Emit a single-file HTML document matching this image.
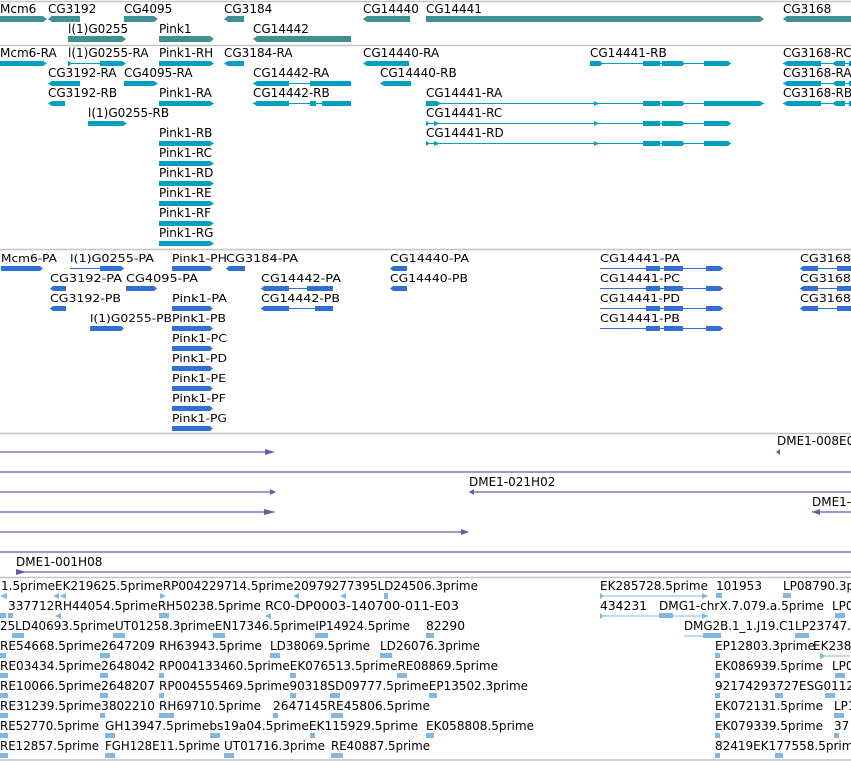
<!DOCTYPE html>
<html><head><meta charset="utf-8"><style>
html,body{margin:0;padding:0;background:#fff;width:851px;height:761px;overflow:hidden}
svg{display:block}
text{font-family:"DejaVu Sans","Liberation Sans",sans-serif;font-size:12px;fill:#000}
.c text{font-size:11px}
</style></head><body>
<svg width="851" height="761" viewBox="0 0 851 761" xmlns="http://www.w3.org/2000/svg">
<g stroke="#c4c4c4" stroke-width="1.5">
<line x1="0" y1="1.5" x2="851" y2="1.5"/><line x1="0" y1="45.5" x2="851" y2="45.5"/><line x1="0" y1="249.5" x2="851" y2="249.5"/><line x1="0" y1="433.5" x2="851" y2="433.5"/><line x1="0" y1="577.5" x2="851" y2="577.5"/><line x1="0" y1="760" x2="851" y2="760"/>
</g>
<!-- genes -->
<g>
<text x="0" y="13">Mcm6</text><text x="48" y="13">CG3192</text><text x="124" y="13">CG4095</text><text x="224" y="13">CG3184</text><text x="363" y="13">CG14440</text><text x="426" y="13">CG14441</text><text x="783" y="13">CG3168</text>
<text x="68" y="33">l(1)G0255</text><text x="159" y="33">Pink1</text><text x="253" y="33">CG14442</text>
</g>
<g fill="#3f8f93">
<polygon points="0,16 43,16 47,19 43,22 0,22"/>
<polygon points="52,16 80,16 80,22 52,22 48,19"/>
<polygon points="124,16 154,16 158,19 154,22 124,22"/>
<polygon points="228,16 244,16 244,22 228,22 224,19"/>
<polygon points="367,16 410,16 410,22 367,22 363,19"/>
<polygon points="426,16 760,16 764,19 760,22 426,22"/>
<polygon points="787,16 851,16 851,22 787,22 783,19"/>
<polygon points="68,36 122,36 126,39 122,42 68,42"/>
<polygon points="159,36 210,36 214,39 210,42 159,42"/>
<polygon points="257,36 351,36 351,42 257,42 253,39"/>
</g>
<!-- transcripts -->
<g>
<text x="0" y="57">Mcm6-RA</text><text x="68" y="57">l(1)G0255-RA</text><text x="159" y="57">Pink1-RH</text><text x="224" y="57">CG3184-RA</text><text x="363" y="57">CG14440-RA</text><text x="590" y="57">CG14441-RB</text><text x="783" y="57">CG3168-RC</text>
<text x="48" y="77">CG3192-RA</text><text x="124" y="77">CG4095-RA</text><text x="253" y="77">CG14442-RA</text><text x="380" y="77">CG14440-RB</text><text x="783" y="77">CG3168-RA</text>
<text x="48" y="97">CG3192-RB</text><text x="159" y="97">Pink1-RA</text><text x="253" y="97">CG14442-RB</text><text x="426" y="97">CG14441-RA</text><text x="783" y="97">CG3168-RB</text>
<text x="88" y="117">l(1)G0255-RB</text><text x="426" y="117">CG14441-RC</text>
<text x="159" y="137">Pink1-RB</text><text x="426" y="137">CG14441-RD</text>
<text x="159" y="157">Pink1-RC</text><text x="159" y="177">Pink1-RD</text><text x="159" y="197">Pink1-RE</text><text x="159" y="217">Pink1-RF</text><text x="159" y="237">Pink1-RG</text>
</g>
<g fill="#00a0c0" stroke="#00a0c0">
<g stroke="none">
<polygon points="0,61 43,61 47,63.5 43,66 0,66"/>
<polygon points="228,61 244,61 244,66 228,66 224,63.5"/>
<polygon points="367,61 409,61 409,66 367,66 363,63.5"/>
<polygon points="52,81 80,81 80,86 52,86 48,83.5"/>
<polygon points="124,81 154,81 158,83.5 154,86 124,86"/>
<polygon points="52,101 65,101 65,106 52,106 48,103.5"/>
<polygon points="384,81 411,81 411,86 384,86 380,83.5"/>
<polygon points="88,121 123,121 127,123.5 123,126 88,126"/>
</g>
<line x1="68" y1="63.5" x2="100" y2="63.5" stroke-width="1"/>
<polygon points="100,61 122,61 126,63.5 122,66 100,66" stroke="none"/>
<polygon points="68,60.5 72,63.5 68,66.5" stroke="none"/>
<!-- pink1 rows -->
<g stroke="none">
<polygon points="159,61 210,61 214,63.5 210,66 159,66"/>
<polygon points="159,101 210,101 214,103.5 210,106 159,106"/>
<polygon points="159,141 210,141 214,143.5 210,146 159,146"/>
<polygon points="159,161 210,161 214,163.5 210,166 159,166"/>
<polygon points="159,181 210,181 214,183.5 210,186 159,186"/>
<polygon points="159,201 210,201 214,203.5 210,206 159,206"/>
<polygon points="159,221 210,221 214,223.5 210,226 159,226"/>
<polygon points="159,241 210,241 214,243.5 210,246 159,246"/>
</g>
<!-- CG14442 -->
<line x1="253" y1="83.5" x2="351" y2="83.5" stroke-width="1"/>
<polygon points="257,81 289,81 289,86 257,86 253,83.5" stroke="none"/>
<polygon points="310,81 351,81 351,86 310,86" stroke="none"/>
<line x1="253" y1="103.5" x2="351" y2="103.5" stroke-width="1"/>
<polygon points="257,101 289,101 289,106 257,106 253,103.5" stroke="none"/>
<polygon points="310,101 316,101 316,106 310,106" stroke="none"/>
<polygon points="322,101 351,101 351,106 322,106" stroke="none"/>
<!-- CG14441 -->
<line x1="590" y1="63.5" x2="731" y2="63.5" stroke-width="1"/>
<line x1="426" y1="103.5" x2="764" y2="103.5" stroke-width="1"/>
<line x1="426" y1="123.5" x2="731" y2="123.5" stroke-width="1"/>
<line x1="426" y1="143.5" x2="731" y2="143.5" stroke-width="1"/>
<g stroke="none">
<polygon points="590,61 600,61 603,63.5 600,66 590,66"/>
<polygon points="426,101 437,101 441,103.5 437,106 426,106"/>
<polygon points="426,121 430,123.5 426,126"/><polygon points="434,121 440,123.5 434,126"/>
<polygon points="426,141 430,143.5 426,146"/><polygon points="434,141 440,143.5 434,146"/>
<polygon points="594,101 599,103.5 594,106"/><polygon points="594,121 599,123.5 594,126"/><polygon points="594,141 599,143.5 594,146"/>
<polygon points="643,61 660,61 660,66 643,66"/><polygon points="662,61 682,61 685,63.5 682,66 662,66"/><polygon points="704,61 728,61 731,63.5 728,66 704,66"/>
<polygon points="643,101 660,101 660,106 643,106"/><polygon points="662,101 682,101 685,103.5 682,106 662,106"/><polygon points="704,101 760,101 764,103.5 760,106 704,106"/>
<polygon points="643,121 660,121 660,126 643,126"/><polygon points="662,121 682,121 685,123.5 682,126 662,126"/><polygon points="704,121 728,121 731,123.5 728,126 704,126"/>
<polygon points="643,141 660,141 660,146 643,146"/><polygon points="662,141 682,141 685,143.5 682,146 662,146"/><polygon points="704,141 728,141 731,143.5 728,146 704,146"/>
</g>
<!-- CG3168 -->
<line x1="783" y1="63.5" x2="851" y2="63.5" stroke-width="1"/><line x1="783" y1="83.5" x2="851" y2="83.5" stroke-width="1"/><line x1="783" y1="103.5" x2="851" y2="103.5" stroke-width="1"/>
<g stroke="none">
<polygon points="787,61 821,61 821,66 787,66 783,63.5"/><polygon points="836,61 845,61 845,66 836,66 832,63.5"/><polygon points="849,61 851,61 851,66 849,66"/>
<polygon points="787,81 821,81 821,86 787,86 783,83.5"/><polygon points="836,81 845,81 845,86 836,86 832,83.5"/><polygon points="849,81 851,81 851,86 849,86"/>
<polygon points="787,101 821,101 821,106 787,106 783,103.5"/><polygon points="836,101 845,101 845,106 836,106 832,103.5"/><polygon points="849,101 851,101 851,106 849,106"/>
</g>
</g>
<!-- proteins -->
<g class="c">
<text x="1" y="262" textLength="56" lengthAdjust="spacingAndGlyphs">Mcm6-PA</text>
<text x="70" y="262" textLength="84" lengthAdjust="spacingAndGlyphs">l(1)G0255-PA</text>
<text x="172" y="262" textLength="55" lengthAdjust="spacingAndGlyphs">Pink1-PH</text>
<text x="226" y="262" textLength="72" lengthAdjust="spacingAndGlyphs">CG3184-PA</text>
<text x="390" y="262" textLength="79" lengthAdjust="spacingAndGlyphs">CG14440-PA</text>
<text x="600" y="262" textLength="80" lengthAdjust="spacingAndGlyphs">CG14441-PA</text>
<text x="800" y="262" textLength="51" lengthAdjust="spacingAndGlyphs">CG3168</text>
<text x="50" y="282" textLength="72" lengthAdjust="spacingAndGlyphs">CG3192-PA</text>
<text x="126" y="282" textLength="72" lengthAdjust="spacingAndGlyphs">CG4095-PA</text>
<text x="261" y="282" textLength="80" lengthAdjust="spacingAndGlyphs">CG14442-PA</text>
<text x="390" y="282" textLength="78" lengthAdjust="spacingAndGlyphs">CG14440-PB</text>
<text x="600" y="282" textLength="80" lengthAdjust="spacingAndGlyphs">CG14441-PC</text>
<text x="800" y="282" textLength="51" lengthAdjust="spacingAndGlyphs">CG3168</text>
<text x="50" y="302" textLength="71" lengthAdjust="spacingAndGlyphs">CG3192-PB</text>
<text x="172" y="302" textLength="55" lengthAdjust="spacingAndGlyphs">Pink1-PA</text>
<text x="261" y="302" textLength="79" lengthAdjust="spacingAndGlyphs">CG14442-PB</text>
<text x="600" y="302" textLength="80" lengthAdjust="spacingAndGlyphs">CG14441-PD</text>
<text x="800" y="302" textLength="51" lengthAdjust="spacingAndGlyphs">CG3168</text>
<text x="90" y="322" textLength="82" lengthAdjust="spacingAndGlyphs">l(1)G0255-PB</text>
<text x="172" y="322" textLength="54" lengthAdjust="spacingAndGlyphs">Pink1-PB</text>
<text x="600" y="322" textLength="80" lengthAdjust="spacingAndGlyphs">CG14441-PB</text>
<text x="172" y="342" textLength="55" lengthAdjust="spacingAndGlyphs">Pink1-PC</text>
<text x="172" y="362" textLength="55" lengthAdjust="spacingAndGlyphs">Pink1-PD</text>
<text x="172" y="382" textLength="54" lengthAdjust="spacingAndGlyphs">Pink1-PE</text>
<text x="172" y="402" textLength="54" lengthAdjust="spacingAndGlyphs">Pink1-PF</text>
<text x="172" y="422" textLength="55" lengthAdjust="spacingAndGlyphs">Pink1-PG</text>
</g>
<g fill="#2f6fd6" stroke="#2f6fd6">
<g stroke="none">
<polygon points="1,266 40,266 43,268.5 40,271 1,271"/>
<polygon points="229,266 245,266 245,271 229,271 226,268.5"/>
<polygon points="393,266 407,266 407,271 393,271 390,268.5"/>
<polygon points="393,286 407,286 407,291 393,291 390,288.5"/>
<polygon points="126,286 154,286 157,288.5 154,291 126,291"/>
<polygon points="53,286 66,286 66,291 53,291 50,288.5"/>
<polygon points="53,306 66,306 66,311 53,311 50,308.5"/>
<polygon points="90,326 121,326 124,328.5 121,331 90,331"/>
<polygon points="172,266 210,266 213,268.5 210,271 172,271"/>
<polygon points="172,306 210,306 213,308.5 210,311 172,311"/>
<polygon points="172,326 210,326 213,328.5 210,331 172,331"/>
<polygon points="172,346 210,346 213,348.5 210,351 172,351"/>
<polygon points="172,366 210,366 213,368.5 210,371 172,371"/>
<polygon points="172,386 210,386 213,388.5 210,391 172,391"/>
<polygon points="172,406 210,406 213,408.5 210,411 172,411"/>
<polygon points="172,426 210,426 213,428.5 210,431 172,431"/>
</g>
<line x1="70" y1="268.5" x2="124" y2="268.5" stroke-width="1"/>
<polygon points="100,266 121,266 124,268.5 121,271 100,271" stroke="none"/>
<line x1="261" y1="288.5" x2="333" y2="288.5" stroke-width="1"/><line x1="261" y1="308.5" x2="333" y2="308.5" stroke-width="1"/>
<g stroke="none">
<polygon points="264,286 289,286 289,291 264,291 261,288.5"/><polygon points="307,286 333,286 333,291 307,291"/>
<polygon points="264,306 289,306 289,311 264,311 261,308.5"/><polygon points="315,306 333,306 333,311 315,311"/>
</g>
<line x1="600" y1="268.5" x2="723" y2="268.5" stroke-width="1"/><line x1="600" y1="288.5" x2="723" y2="288.5" stroke-width="1"/><line x1="600" y1="308.5" x2="723" y2="308.5" stroke-width="1"/><line x1="600" y1="328.5" x2="723" y2="328.5" stroke-width="1"/>
<g stroke="none">
<polygon points="646,266 660,266 660,271 646,271"/><polygon points="664,266 683,266 683,271 664,271"/><polygon points="706,266 720,266 723,268.5 720,271 706,271"/>
<polygon points="646,286 660,286 660,291 646,291"/><polygon points="664,286 683,286 683,291 664,291"/><polygon points="706,286 720,286 723,288.5 720,291 706,291"/>
<polygon points="646,306 660,306 660,311 646,311"/><polygon points="664,306 683,306 683,311 664,311"/><polygon points="706,306 720,306 723,308.5 720,311 706,311"/>
<polygon points="646,326 660,326 660,331 646,331"/><polygon points="664,326 683,326 683,331 664,331"/><polygon points="706,326 720,326 723,328.5 720,331 706,331"/>
</g>
<line x1="800" y1="268.5" x2="851" y2="268.5" stroke-width="1"/><line x1="800" y1="288.5" x2="851" y2="288.5" stroke-width="1"/><line x1="800" y1="308.5" x2="851" y2="308.5" stroke-width="1"/>
<g stroke="none">
<polygon points="803,266 818,266 818,271 803,271 800,268.5"/><polygon points="837,266 851,266 851,271 837,271"/>
<polygon points="803,286 818,286 818,291 803,291 800,288.5"/><polygon points="837,286 851,286 851,291 837,291"/>
<polygon points="803,306 818,306 818,311 803,311 800,308.5"/><polygon points="837,306 851,306 851,311 837,311"/>
</g>
</g>
<!-- purple clones -->
<g stroke="#7355b0" stroke-width="1.2" fill="#7355b0">
<line x1="0" y1="452" x2="270" y2="452"/><polygon points="265,449 275,452 265,455" stroke="none"/>
<line x1="0" y1="472" x2="851" y2="472"/>
<line x1="0" y1="492" x2="270" y2="492"/><polygon points="270,489 276,492 270,495" stroke="none"/>
<line x1="469" y1="492" x2="851" y2="492"/><polygon points="474,489 469,492 474,495" stroke="none"/>
<line x1="0" y1="512" x2="270" y2="512"/><polygon points="264,509 276,512 264,515" stroke="none"/>
<line x1="812" y1="512" x2="851" y2="512"/><polygon points="820,509 812,512 820,515" stroke="none"/>
<line x1="0" y1="532" x2="464" y2="532"/><polygon points="461,529 469,532 461,535" stroke="none"/>
<line x1="0" y1="552" x2="851" y2="552"/>
<line x1="16" y1="572" x2="851" y2="572"/><polygon points="16,569 26,572 16,575" stroke="none"/>
<polygon points="780,449 776,452 780,455" stroke="none"/>
</g>
<text x="777" y="445">DME1-008E0</text>
<text x="469" y="486">DME1-021H02</text>
<text x="812" y="506">DME1-</text>
<text x="16" y="566">DME1-001H08</text>
<!-- ESTs -->
<g>
<text x="1" y="590" textLength="477" lengthAdjust="spacingAndGlyphs">1.5primeEK219625.5primeRP004229714.5prime20979277395LD24506.3prime</text>
<text x="600" y="590" textLength="108" lengthAdjust="spacingAndGlyphs">EK285728.5prime</text>
<text x="716" y="590" textLength="46" lengthAdjust="spacingAndGlyphs">101953</text>
<text x="783" y="590">LP08790.3prime</text>
<text x="8" y="610" textLength="253" lengthAdjust="spacingAndGlyphs">337712RH44054.5primeRH50238.5prime</text>
<text x="265" y="610" textLength="194" lengthAdjust="spacingAndGlyphs">RC0-DP0003-140700-011-E03</text>
<text x="600" y="610" textLength="47" lengthAdjust="spacingAndGlyphs">434231</text>
<text x="659" y="610" textLength="165" lengthAdjust="spacingAndGlyphs">DMG1-chrX.7.079.a.5prime</text>
<text x="832" y="610">LP0</text>
<text x="0" y="630" textLength="410" lengthAdjust="spacingAndGlyphs">25LD40693.5primeUT01258.3primeEN17346.5primeIP14924.5prime</text>
<text x="426" y="630" textLength="39" lengthAdjust="spacingAndGlyphs">82290</text>
<text x="684" y="630" textLength="111" lengthAdjust="spacingAndGlyphs">DMG2B.1_1.J19.C1</text>
<text x="795" y="630">LP23747.</text>
<text x="0" y="650" textLength="155" lengthAdjust="spacingAndGlyphs">RE54668.5prime2647209</text>
<text x="159" y="650" textLength="103" lengthAdjust="spacingAndGlyphs">RH63943.5prime</text>
<text x="270" y="650" textLength="100" lengthAdjust="spacingAndGlyphs">LD38069.5prime</text>
<text x="380" y="650" textLength="100" lengthAdjust="spacingAndGlyphs">LD26076.3prime</text>
<text x="715" y="650" textLength="100" lengthAdjust="spacingAndGlyphs">EP12803.3prime</text>
<text x="813" y="650">EK238</text>
<text x="0" y="670" textLength="155" lengthAdjust="spacingAndGlyphs">RE03434.5prime2648042</text>
<text x="159" y="670" textLength="339" lengthAdjust="spacingAndGlyphs">RP004133460.5primeEK076513.5primeRE08869.5prime</text>
<text x="715" y="670" textLength="108" lengthAdjust="spacingAndGlyphs">EK086939.5prime</text>
<text x="832" y="670">LP0</text>
<text x="0" y="690" textLength="155" lengthAdjust="spacingAndGlyphs">RE10066.5prime2648207</text>
<text x="159" y="690" textLength="369" lengthAdjust="spacingAndGlyphs">RP004555469.5prime90318SD09777.5primeEP13502.3prime</text>
<text x="715" y="690">92174293727ESG0112</text>
<text x="0" y="710" textLength="155" lengthAdjust="spacingAndGlyphs">RE31239.5prime3802210</text>
<text x="159" y="710" textLength="102" lengthAdjust="spacingAndGlyphs">RH69710.5prime</text>
<text x="273" y="710" textLength="157" lengthAdjust="spacingAndGlyphs">2647145RE45806.5prime</text>
<text x="715" y="710" textLength="108" lengthAdjust="spacingAndGlyphs">EK072131.5prime</text>
<text x="834" y="710">LP1</text>
<text x="0" y="730" textLength="99" lengthAdjust="spacingAndGlyphs">RE52770.5prime</text>
<text x="105" y="730" textLength="313" lengthAdjust="spacingAndGlyphs">GH13947.5primebs19a04.5primeEK115929.5prime</text>
<text x="426" y="730" textLength="108" lengthAdjust="spacingAndGlyphs">EK058808.5prime</text>
<text x="715" y="730" textLength="108" lengthAdjust="spacingAndGlyphs">EK079339.5prime</text>
<text x="834" y="730">37</text>
<text x="0" y="750" textLength="99" lengthAdjust="spacingAndGlyphs">RE12857.5prime</text>
<text x="105" y="750" textLength="115" lengthAdjust="spacingAndGlyphs">FGH128E11.5prime</text>
<text x="224" y="750" textLength="101" lengthAdjust="spacingAndGlyphs">UT01716.3prime</text>
<text x="331" y="750" textLength="99" lengthAdjust="spacingAndGlyphs">RE40887.5prime</text>
<text x="715" y="750">82419EK177558.5prime</text>
</g>
<g fill="#80b8e0" stroke="#80b8e0" stroke-width="1">
<g stroke="none">
<polygon points="0,596 7,593 7,599"/><polygon points="53,596 59,593 59,599"/><polygon points="60,596 66,593 66,599"/><polygon points="160,593 166,596 160,599"/><polygon points="293,596 299,593 299,599"/><polygon points="340,596 346,593 346,599"/><polygon points="378,596 384,593 384,599 388,599 388,593 384,593"/>
<rect x="0" y="613" width="6" height="5"/><rect x="8" y="613" width="5" height="5"/><polygon points="55,616 61,613 61,619"/><rect x="159" y="613" width="10" height="5"/><polygon points="265,616 271,613 271,619"/>
<rect x="12" y="633" width="12" height="5"/><rect x="113" y="633" width="12" height="5"/><rect x="213" y="633" width="12" height="5"/><rect x="315" y="633" width="13" height="5"/><rect x="426" y="633" width="8" height="5"/>
<rect x="0" y="653" width="6" height="5"/><rect x="100" y="653" width="10" height="5"/><rect x="270" y="653" width="10" height="5"/><rect x="380" y="653" width="12" height="5"/>
<rect x="0" y="673" width="8" height="5"/><rect x="100" y="673" width="8" height="5"/><rect x="159" y="673" width="5" height="5"/><rect x="290" y="673" width="6" height="5"/><rect x="397" y="673" width="10" height="5"/>
<rect x="0" y="693" width="8" height="5"/><rect x="100" y="693" width="8" height="5"/><rect x="159" y="693" width="5" height="5"/><rect x="290" y="693" width="6" height="5"/><rect x="330" y="693" width="10" height="5"/><rect x="429" y="693" width="8" height="5"/>
<rect x="0" y="713" width="8" height="5"/><rect x="100" y="713" width="5" height="5"/><rect x="159" y="713" width="15" height="5"/><rect x="273" y="713" width="5" height="5"/><rect x="331" y="713" width="12" height="5"/>
<rect x="0" y="733" width="8" height="5"/><rect x="105" y="733" width="10" height="5"/><rect x="210" y="733" width="10" height="5"/><rect x="310" y="733" width="5" height="5"/><rect x="426" y="733" width="8" height="5"/>
<rect x="0" y="753" width="8" height="5"/><rect x="105" y="753" width="10" height="5"/><rect x="224" y="753" width="10" height="5"/><rect x="331" y="753" width="12" height="5"/>
<rect x="716" y="593" width="6" height="5"/><rect x="783" y="593" width="8" height="5"/>
<rect x="659" y="613" width="14" height="5"/><rect x="835" y="613" width="10" height="5"/>
<rect x="703" y="633" width="18" height="5"/><rect x="795" y="633" width="14" height="5"/>
<rect x="715" y="653" width="5" height="5"/>
<rect x="715" y="673" width="5" height="5"/><rect x="835" y="673" width="10" height="5"/>
<rect x="715" y="693" width="5" height="5"/><rect x="775" y="693" width="8" height="5"/><rect x="825" y="693" width="10" height="5"/>
<rect x="715" y="713" width="5" height="5"/><rect x="834" y="713" width="10" height="5"/>
<rect x="715" y="733" width="5" height="5"/><rect x="834" y="733" width="5" height="5"/>
<rect x="715" y="753" width="5" height="5"/><rect x="775" y="753" width="8" height="5"/>
</g>
<line x1="600" y1="596" x2="708" y2="596"/><polygon points="702,593 708,596 702,599" stroke="none"/><polygon points="600,593 604,596 600,599" stroke="none"/>
<line x1="600" y1="616" x2="708" y2="616"/><polygon points="702,613 708,616 702,619" stroke="none"/><polygon points="600,613 604,616 600,619" stroke="none"/>
<line x1="684" y1="636" x2="720" y2="636"/>
<line x1="820" y1="656" x2="850" y2="656"/><polygon points="820,653 826,656 820,659" stroke="none"/>
</g>
</svg>
</body></html>
